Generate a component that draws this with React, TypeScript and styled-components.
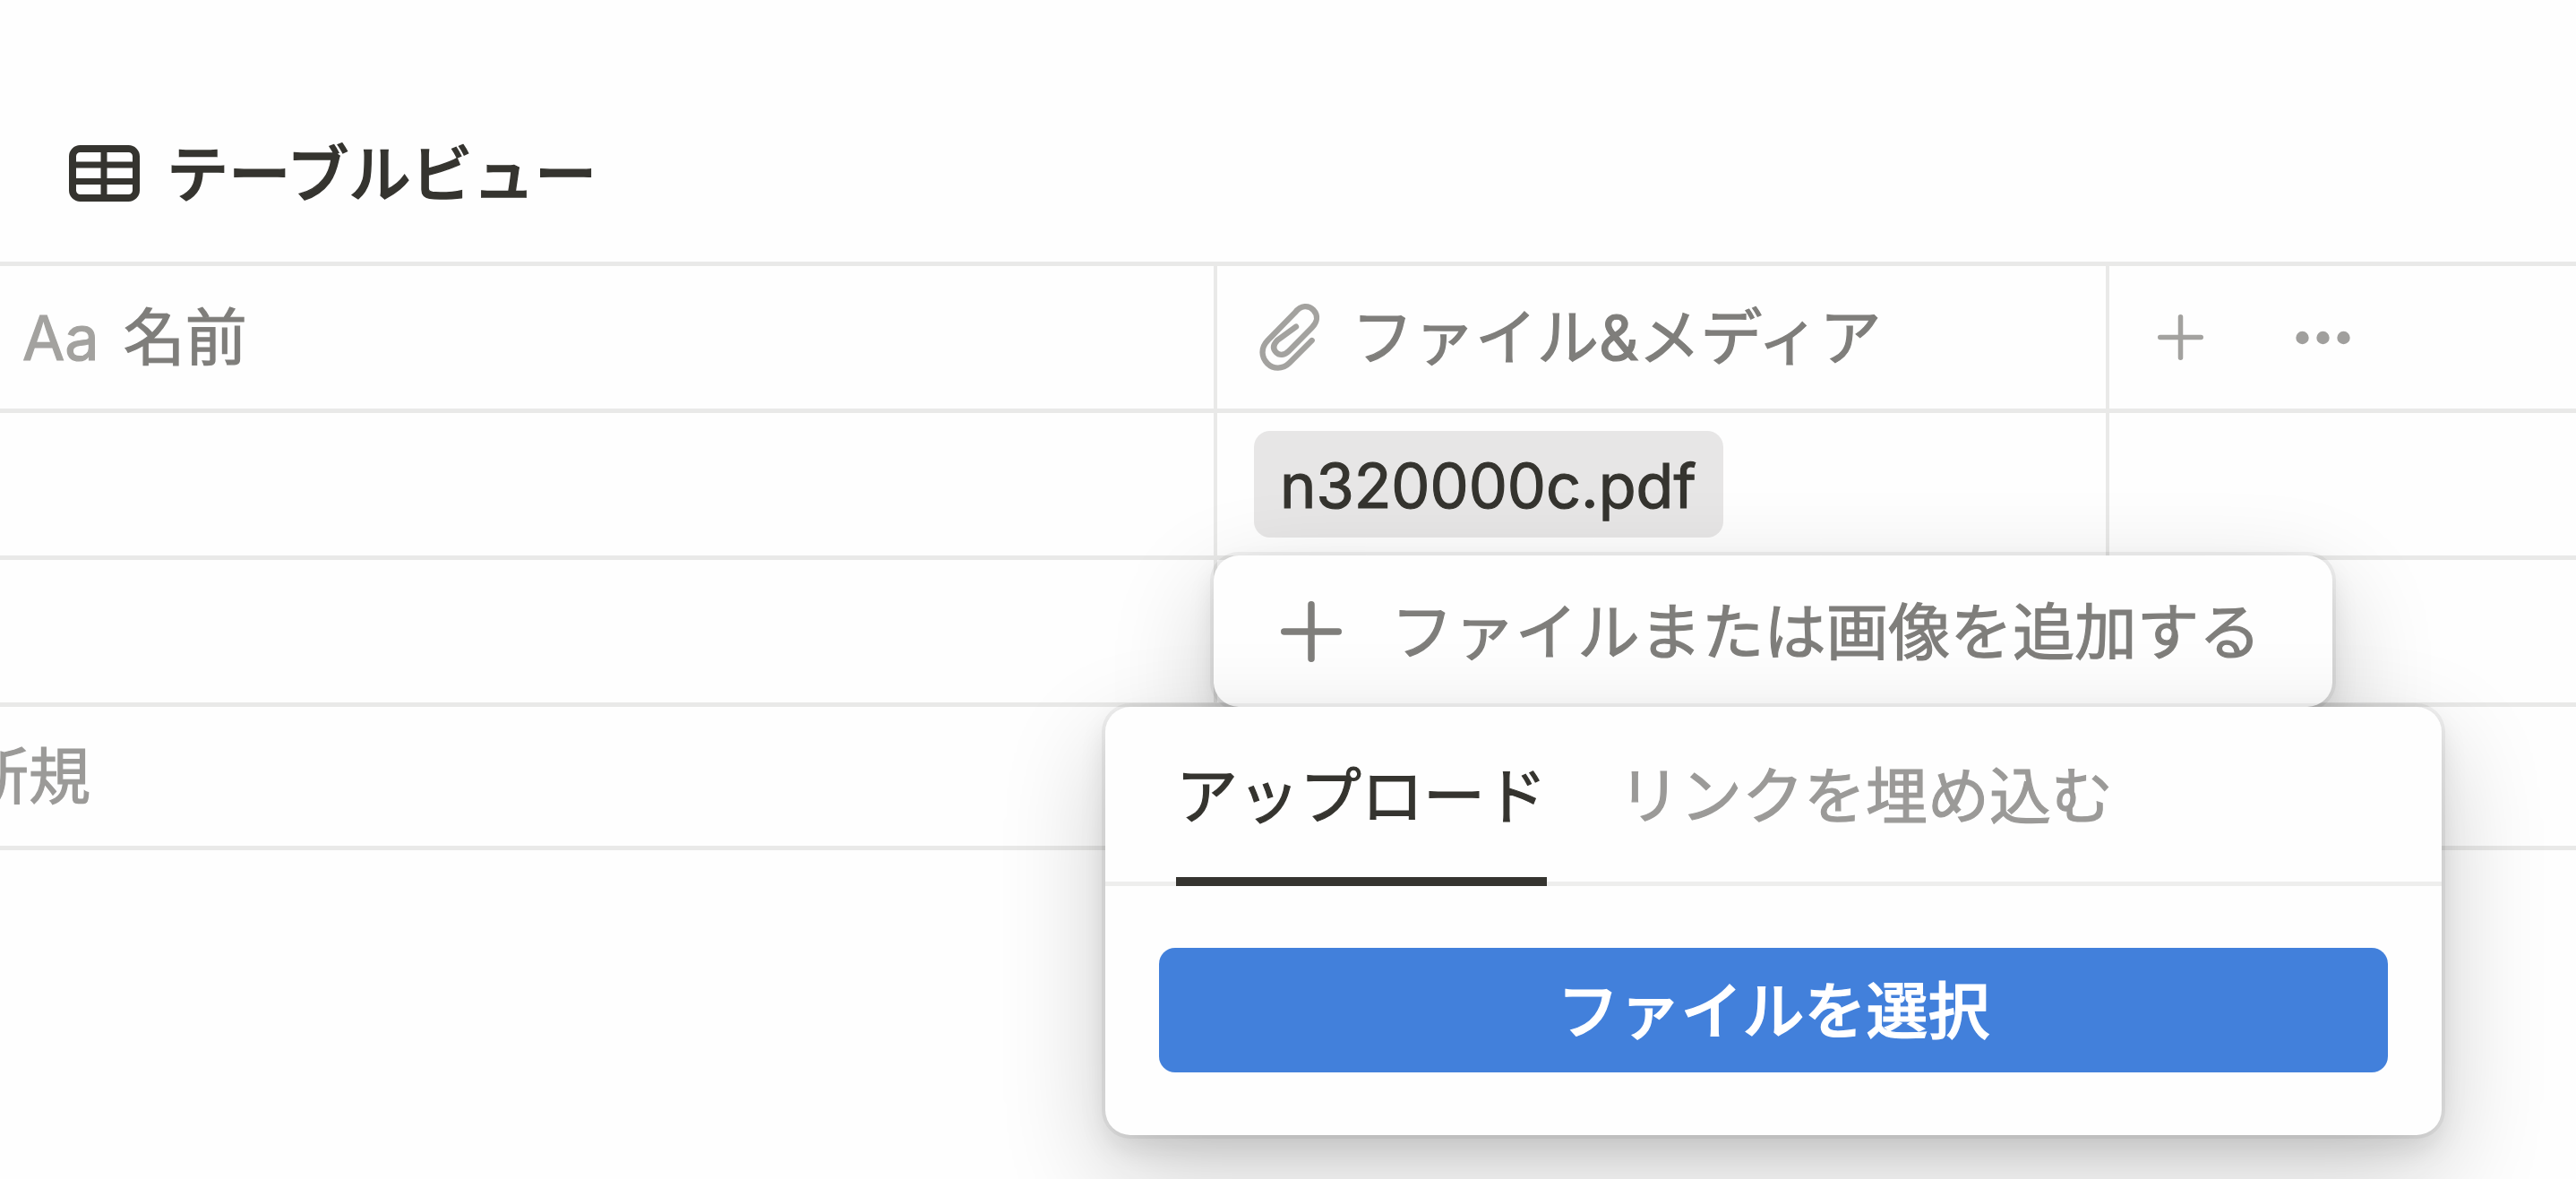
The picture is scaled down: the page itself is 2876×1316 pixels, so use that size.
import React from "react";
import styled, { createGlobalStyle } from "styled-components";

const ink = "#35342f";
const line = "#e9e9e8";

const GlobalStyle = createGlobalStyle`
  * { box-sizing: border-box; }
  body { margin: 0; background: #fefefe; }
  button { border: 0; background: none; padding: 0; font: inherit; color: inherit; }
`;

const Page = styled.main`
  position: relative;
  width: 2876px;
  height: 1316px;
  overflow: hidden;
  background: #fefefe;
  color: ${ink};
  font-family: Inter, "Noto Sans CJK JP", sans-serif;
  font-size: 69px;
  line-height: 100px;
  white-space: nowrap;
  -webkit-text-stroke: 1.2px currentColor;
`;

const ViewBar = styled.header`
  display: flex;
  align-items: center;
  gap: 29px;
  height: 292px;
  padding: 95px 0 0 77px;
`;

const ViewName = styled.h1`
  margin: 0;
  padding-top: 3px;
  font-size: 69.2px;
  font-weight: 500;
  line-height: 100px;
  -webkit-text-stroke: 1.4px currentColor;
`;

const ViewIcon = styled.svg`
  display: block;
`;

const Table = styled.section`
  border-top: 5px solid ${line};
`;

const Row = styled.div`
  display: grid;
  grid-template-columns: 1359px 996px 1fr;
  height: 164px;
  border-bottom: 5px solid ${line};
`;

const Cell = styled.div<{ $pad?: number; $last?: boolean }>`
  display: flex;
  align-items: center;
  padding-left: ${(p) => p.$pad ?? 0}px;
  border-right: ${(p) => (p.$last ? "0" : `4px solid ${line}`)};
`;

const HeadLabel = styled.span<{ $gap: number }>`
  margin-left: ${(p) => p.$gap}px;
  color: #7f7e7b;
`;

const TypeMark = styled.span`
  padding-top: 2px;
  color: #a3a29f;
  font-size: 68.5px;
`;

const Chip = styled.span`
  display: flex;
  align-items: center;
  width: 524px;
  height: 119px;
  padding: 3px 0 0 29px;
  border-radius: 18px;
  background: #e7e6e6;
  font-size: 68.4px;
`;

const NewRow = styled.div`
  display: flex;
  align-items: center;
  height: 160px;
  border-bottom: 5px solid ${line};
  color: #9b9a98;
`;

const NewLabel = styled.span`
  margin: 0 0 0 -37px;
`;

const HeadIcon = styled.svg<{ $gap?: number }>`
  display: block;
  flex: none;
  margin-left: ${(p) => p.$gap ?? 0}px;
`;

const Floating = styled.div`
  position: absolute;
  background: #fefefe;
  border-radius: 28px;
  box-shadow: 0 0 0 4px rgba(15, 15, 15, 0.05), 0 15px 30px rgba(15, 15, 15, 0.1),
    0 44px 118px rgba(15, 15, 15, 0.2);
`;

const AddMenu = styled(Floating)`
  left: 1355px;
  top: 620px;
  width: 1249px;
  height: 169px;
  display: flex;
  align-items: center;
  padding-left: 75px;
  color: #7f7e7b;
`;

const AddLabel = styled.span`
  margin-left: 55px;
  padding-top: 2px;
  font-size: 69.4px;
`;

const Popup = styled(Floating)`
  left: 1234px;
  top: 789px;
  width: 1492px;
  height: 478px;
  display: flex;
  flex-direction: column;
`;

const Tabs = styled.div`
  display: flex;
  gap: 80px;
  height: 200px;
  padding-left: 79px;
  border-bottom: 5px solid #eeeeed;
`;

const Tab = styled.button<{ $active?: boolean }>`
  height: 200px;
  padding: 9px 0 ${(p) => (p.$active ? 0 : 10)}px;
  border-bottom: ${(p) => (p.$active ? `10px solid ${ink}` : "0")};
  color: ${(p) => (p.$active ? ink : "#9b9a98")};
`;

const PopupBody = styled.div`
  padding: 69px 60px 0;
`;

const SelectButton = styled.button`
  display: block;
  width: 100%;
  height: 139px;
  padding-top: 3px;
  border-radius: 18px;
  background: #4280db;
  color: #fff;
  font-weight: 500;
  -webkit-text-stroke: 1.2px currentColor;
`;

function TableIcon() {
  return (
    <ViewIcon width="80" height="63" viewBox="0 0 80 63" fill="none" stroke={ink} strokeWidth="8">
      <rect x="4" y="4" width="71" height="55" rx="8.500" />
      <path d="M39 4v55M4 22h71M4 40.500h71" strokeWidth="7" />
    </ViewIcon>
  );
}

function ClipIcon() {
  return (
    <HeadIcon width="100" height="100" viewBox="0 0 300 300" fill="none" stroke="#a3a29f" strokeWidth="19" strokeLinecap="round">
      <path transform="translate(0 7)" d="M224 152L149 227C126 250 94 248 75 229C54 208 52 177 76 152L168 58C187 34 213 33 229 50C246 68 242 91 224 109L147 187C132 202 116 204 104 192C92 180 95 166 108 152L171 106" />
    </HeadIcon>
  );
}

function PlusIcon({ size, weight, color }: { size: number; weight: number; color: string }) {
  const mid = size / 2;
  return (
    <HeadIcon width={size} height={size} stroke={color} strokeWidth={weight} strokeLinecap="round">
      <path d={`M${mid} ${weight / 2}V${size - weight / 2}M${weight / 2} ${mid}H${size - weight / 2}`} />
    </HeadIcon>
  );
}

function DotsIcon() {
  return (
    <HeadIcon $gap={103} width="62" height="16" fill="#a09f9d">
      <circle cx="7.500" cy="8" r="7.200" />
      <circle cx="30.500" cy="8" r="7.200" />
      <circle cx="53.500" cy="8" r="7.200" />
    </HeadIcon>
  );
}

export default function App() {
  return (
    <Page>
      <GlobalStyle />
      <ViewBar>
        <TableIcon />
        <ViewName>テーブルビュー</ViewName>
      </ViewBar>
      <Table>
        <Row>
          <Cell $pad={25}>
            <TypeMark>Aa</TypeMark>
            <HeadLabel $gap={27}>名前</HeadLabel>
          </Cell>
          <Cell $pad={31}>
            <ClipIcon />
            <HeadLabel $gap={19}>ファイル&amp;メディア</HeadLabel>
          </Cell>
          <Cell $pad={54} $last>
            <PlusIcon size={51} weight={5.5} color="#a3a29f" />
            <DotsIcon />
          </Cell>
        </Row>
        <Row>
          <Cell />
          <Cell $pad={41}>
            <Chip>n320000c.pdf</Chip>
          </Cell>
          <Cell $last />
        </Row>
        <Row>
          <Cell />
          <Cell />
          <Cell $last />
        </Row>
        <NewRow>
          <NewLabel>新規</NewLabel>
        </NewRow>
      </Table>
      <AddMenu>
        <PlusIcon size={68} weight={7.5} color="#7f7e7b" />
        <AddLabel>ファイルまたは画像を追加する</AddLabel>
      </AddMenu>
      <Popup>
        <Tabs>
          <Tab $active>アップロード</Tab>
          <Tab>リンクを埋め込む</Tab>
        </Tabs>
        <PopupBody>
          <SelectButton>ファイルを選択</SelectButton>
        </PopupBody>
      </Popup>
    </Page>
  );
}
